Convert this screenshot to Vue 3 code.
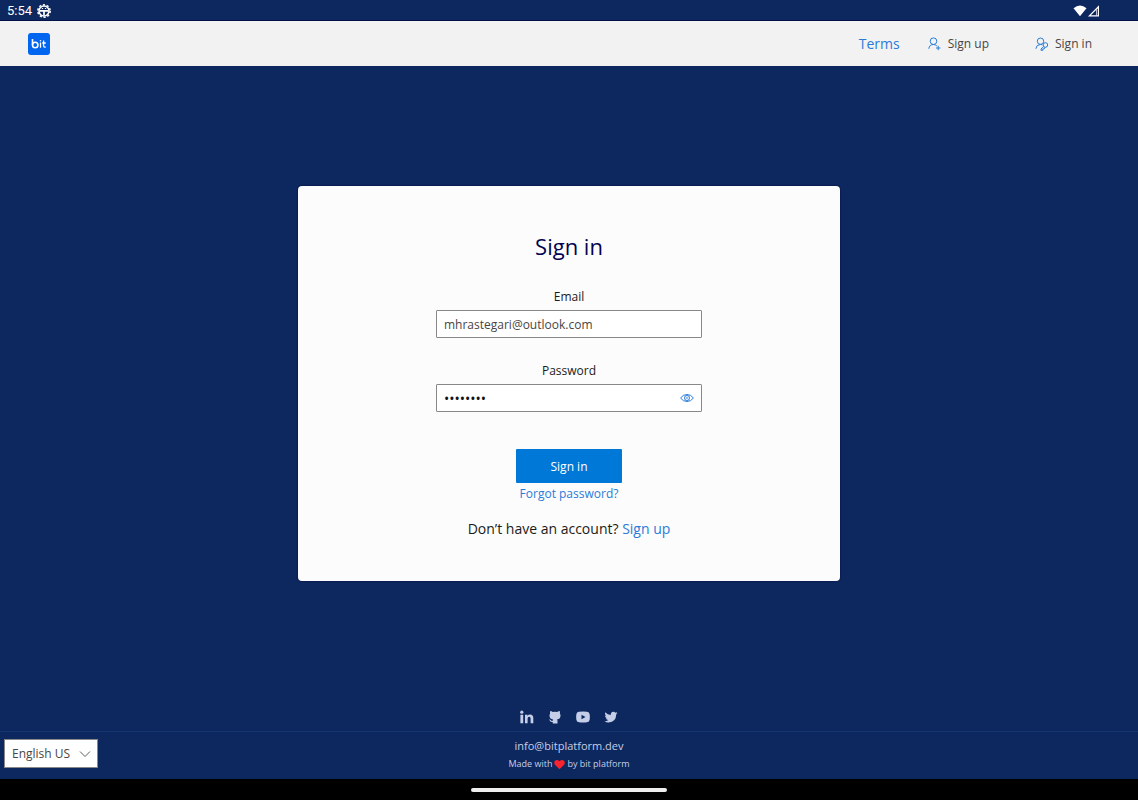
<script setup>
import { ref } from 'vue'

const email = ref('mhrastegari@outlook.com')
const password = ref('password')
const showPassword = ref(false)
const language = ref('en-US')
</script>

<template>
  <div class="screen">
    <div class="status-bar">
      <span class="time">5:54</span>
      <svg class="status-gear" viewBox="0 0 14 14">
        <circle cx="7" cy="7" r="5" fill="none" stroke="#fff" stroke-width="1.6" />
        <circle cx="7" cy="7" r="6.2" fill="none" stroke="#fff" stroke-width="1.5" stroke-dasharray="2.2 1.7" />
        <path d="M3 6.8h8M7 7v4.5" stroke="#fff" stroke-width="1.7" />
        <path d="M4.8 4.5h1.3M7.9 4.5h1.3" stroke="#fff" stroke-width="1" />
      </svg>
      <svg class="signal" viewBox="0 0 27 12">
        <path d="M0.5 3.2Q7 -2 13.5 3.2L7 11.2z" fill="#fff" />
        <path d="M25.4 1.8V10.8H16.4z" fill="#0d285e" stroke="#fff" stroke-width="1.2" />
        <path d="M23.5 4.5V10.5" stroke="#fff" stroke-width="0.7" />
      </svg>
    </div>

    <header class="header">
      <a class="logo" href="#" aria-label="bit">
        <svg viewBox="0 0 22 22">
          <rect width="22" height="22" rx="3" fill="#0065ef" />
          <g fill="none" stroke="#fff" stroke-width="1.6">
            <path d="M4.5 6v6" />
            <circle cx="7.2" cy="12" r="2.7" />
            <path d="M12.5 9.5v5.2M15.6 7.5v5.5q0 1.1 1.2 1.1h1M14.2 10h3.6" stroke-width="1.3" />
          </g>
          <circle cx="12.5" cy="7.7" r="0.8" fill="#fff" />
        </svg>
      </a>
      <nav class="nav">
        <a class="terms" href="#">Terms</a>
        <a class="nav-item" href="#">
          <svg viewBox="0 0 14 14">
            <circle cx="5.5" cy="4.2" r="3.3" />
            <path d="M0.8 11.8Q1.2 7.6 5.5 7.5Q7.7 7.6 8.9 9M10.2 8.8v4.4M8 11h4.4" />
          </svg>
          <span>Sign up</span>
        </a>
        <a class="nav-item" href="#">
          <svg viewBox="0 0 14 14">
            <circle cx="5.5" cy="4.2" r="3.2" />
            <path d="M0.8 11.8Q1.2 7.6 5.5 7.4L7.3 7.8" />
            <circle cx="10.4" cy="8" r="2.3" />
            <path d="M8.7 9.5L6 12v1.3h1.8v-1.4h1.4l.8-1.6" />
          </svg>
          <span>Sign in</span>
        </a>
      </nav>
    </header>

    <main class="main">
      <form class="card" @submit.prevent>
        <h1 class="title">Sign in</h1>

        <div class="field">
          <label for="email">Email</label>
          <input id="email" v-model="email" type="email" autocomplete="email" />
        </div>

        <div class="field">
          <label for="password">Password</label>
          <div class="password-box">
            <input id="password" v-model="password" :type="showPassword ? 'text' : 'password'" />
            <button class="reveal" type="button" aria-label="Show password" @click="showPassword = !showPassword">
              <svg viewBox="0 0 14 10">
                <path d="M0.6 5Q3 1.5 7 1.5t6.4 3.5Q11 8.5 7 8.5T0.6 5z" />
                <circle cx="7" cy="5" r="2.5" />
                <circle cx="7" cy="5" r="0.4" />
              </svg>
            </button>
          </div>
        </div>

        <button class="submit" type="submit">Sign in</button>
        <a class="forgot" href="#">Forgot password?</a>
        <p class="register">Don’t have an account? <a href="#">Sign up</a></p>
      </form>
    </main>

    <footer class="footer">
      <div class="social">
        <a href="#" aria-label="LinkedIn">
          <svg viewBox="0 0 14 14">
            <path d="M.4 4.8h2.800V13.300H.4zM5 4.800h2.500v1.100Q8.200 4.600 10 4.600q3.300 0 3.300 3.500V13.300h-2.700V8.700q0-2-1.400-2-1.600 0-1.600 2V13.300H5z" />
            <circle cx="1.8" cy="2.2" r="1.600" />
          </svg>
        </a>
        <a href="#" aria-label="GitHub">
          <svg viewBox="0 0 14 14">
            <path d="M2.300 1Q3.500 1 4.800 2Q7 1.500 9.200 2Q10.500 1 11.700 1Q12.200 2.500 11.900 3.500Q12.700 4.500 12.500 6Q12.300 9 9 9.500Q9.500 10 9.500 11V13.500H4.700V12Q2.500 12.300 1.900 10.700Q1.500 10 .8 9.600Q2.200 9.300 2.900 10.300Q3.600 11.200 4.700 10.700Q4.700 10 5.100 9.500Q1.700 9 1.500 6Q1.400 4.500 2.100 3.500Q1.800 2.500 2.300 1z" />
          </svg>
        </a>
        <a href="#" aria-label="YouTube">
          <svg viewBox="0 0 14 14">
            <path fill-rule="evenodd" d="M3 1.800Q7 1.200 11 1.800Q13.500 2 13.700 4.500Q14 7 13.700 9.500Q13.500 12 11 12.200Q7 12.800 3 12.200Q.5 12 .3 9.500Q0 7 .3 4.500Q.5 2 3 1.800zM5.500 4.800V9.200L9.500 7z" />
          </svg>
        </a>
        <a href="#" aria-label="Twitter">
          <svg viewBox="0 0 14 14">
            <path d="M13.500 3q-.7.4-1.500.5.8-.5 1.100-1.400-.8.4-1.700.6Q10.500 1.600 9.200 1.700 6.700 2 6.700 4.900 3.500 4.800 1.300 2.200q-1.200 2.300.8 3.700-.7 0-1.200-.3.1 2 2.100 2.600-.6.2-1.200.1.6 1.700 2.500 1.800Q2.700 11.500.5 11.300q2 1.300 4.200 1.200 7.400-.4 7.500-7.900.8-.7 1.300-1.600z" />
          </svg>
        </a>
      </div>
      <div class="footer-bottom">
        <div class="language">
          <select v-model="language" aria-label="Language">
            <option value="en-US">English US</option>
            <option value="en-GB">English UK</option>
            <option value="fr-FR">Français</option>
          </select>
          <svg class="chevron" viewBox="0 0 12 12"><path d="M1 3.5L6 8.5L11 3.5" /></svg>
        </div>
        <a class="contact" href="#">info@bitplatform.dev</a>
        <p class="credit">
          Made with
          <svg viewBox="0 0 12 11"><path d="M6 10.7L1 5.8Q-.5 3.5 1 1.5Q3.500-.8 6 2Q8.500-.8 11 1.500Q12.500 3.500 11 5.800z" /></svg>
          by bit platform
        </p>
      </div>
    </footer>

    <div class="gesture-bar"><span></span></div>
  </div>
</template>

<style>
body {
  background: #0d285e;
}
</style>

<style scoped>
* {
  box-sizing: border-box;
}

.screen {
  display: flex;
  flex-direction: column;
  min-height: 100vh;
  background: #0d285e;
  font-family: "Open Sans", "Noto Sans", sans-serif;
  font-size: 12px;
  color: #1b1a19;
}

svg {
  display: block;
}

a {
  color: #2b7bd9;
  text-decoration: none;
}

.status-bar {
  display: flex;
  align-items: center;
  height: 21px;
  padding: 1px 38px 0 7px;
  color: #fff;
  border-bottom: 1px solid #041048;
}

.time {
  font-family: Roboto, sans-serif;
  font-size: 13px;
}

.status-gear {
  width: 14px;
  height: 14px;
  margin-left: 5px;
}

.signal {
  width: 27px;
  height: 12px;
  margin-left: auto;
}

.header {
  display: flex;
  align-items: center;
  justify-content: space-between;
  height: 45px;
  padding: 0 46px 0 28px;
  background: #f2f2f2;
}

.logo svg {
  width: 22px;
  height: 22px;
}

.nav {
  display: flex;
  align-items: center;
}

.terms {
  margin-right: 28px;
  font-size: 14px;
}

.nav-item {
  display: flex;
  align-items: center;
  gap: 6px;
  color: #484644;
}

.nav-item + .nav-item {
  margin-left: 46px;
}

.nav-item svg {
  width: 14px;
  height: 14px;
  fill: none;
  stroke: #2b7bd9;
}

.main {
  flex: 1;
  display: flex;
  align-items: center;
  justify-content: center;
}

.card {
  display: flex;
  flex-direction: column;
  align-items: center;
  width: 100%;
  max-width: 542px;
  padding: 42px 20px 40px;
  background: #fcfcfc;
  border-radius: 4px;
  box-shadow: 0 0 2px #020b3a;
}

.title {
  margin: 0 0 23px;
  font-size: 22px;
  line-height: 36px;
  font-weight: 500;
  color: #03034f;
}

.field {
  width: 100%;
  max-width: 266px;
  margin-bottom: 23px;
}

.field label {
  display: block;
  margin-bottom: 3px;
  line-height: 20px;
  font-weight: 500;
  text-align: center;
}

.field input {
  display: block;
  width: 100%;
  height: 28px;
  padding: 0 7px;
  border: 1px solid #8a8886;
  border-radius: 1px;
  background: #fff;
  color: #484644;
  font: inherit;
  outline: none;
}

.password-box {
  position: relative;
}

.password-box input {
  padding-right: 30px;
  color: #111;
}

.password-box input[type="password"] {
  font-size: 14px;
}

.reveal {
  position: absolute;
  top: 0;
  right: 0;
  height: 28px;
  padding: 0 8px;
  border: 0;
  background: none;
}

.reveal svg {
  width: 14px;
  height: 10px;
  fill: none;
  stroke: #2b7bd9;
}

.submit {
  width: 106px;
  height: 34px;
  margin-top: 14px;
  padding: 0;
  border: 0;
  border-radius: 1px;
  background: #0078d7;
  color: #fff;
  font: inherit;
  font-weight: 500;
}

.forgot {
  margin-top: 1px;
  line-height: 20px;
}

.register {
  margin: 13px 0 0;
  font-size: 14px;
  line-height: 24px;
}

.footer {
  color: #c5cee8;
}

.social {
  display: flex;
  justify-content: center;
  gap: 14px;
  height: 30px;
  padding-top: 9px;
}

.social svg {
  width: 14px;
  height: 14px;
  fill: #c5cee8;
}

.footer-bottom {
  position: relative;
  display: flex;
  flex-direction: column;
  align-items: center;
  height: 48px;
  padding-top: 4px;
  border-top: 1px solid #16366f;
}

.contact {
  color: inherit;
  font-size: 11px;
  line-height: 19px;
}

.credit {
  display: flex;
  align-items: center;
  gap: 2px;
  margin: 0;
  font-size: 9px;
  line-height: 18px;
}

.credit svg {
  width: 11px;
  height: 11px;
  fill: #f8232f;
}

.language {
  position: absolute;
  left: 4px;
  top: 7px;
}

.language select {
  width: 94px;
  height: 29px;
  padding: 0 7px;
  appearance: none;
  border: 1px solid #8a8886;
  border-radius: 0;
  background: #fff;
  color: #484644;
  font: inherit;
}

.chevron {
  position: absolute;
  top: 9px;
  right: 7px;
  width: 12px;
  height: 12px;
  fill: none;
  stroke: #605e5c;
  pointer-events: none;
}

.gesture-bar {
  display: flex;
  align-items: center;
  justify-content: center;
  height: 21px;
  background: #000;
}

.gesture-bar span {
  width: 196px;
  height: 4px;
  border-radius: 2px;
  background: #eee;
}
</style>
